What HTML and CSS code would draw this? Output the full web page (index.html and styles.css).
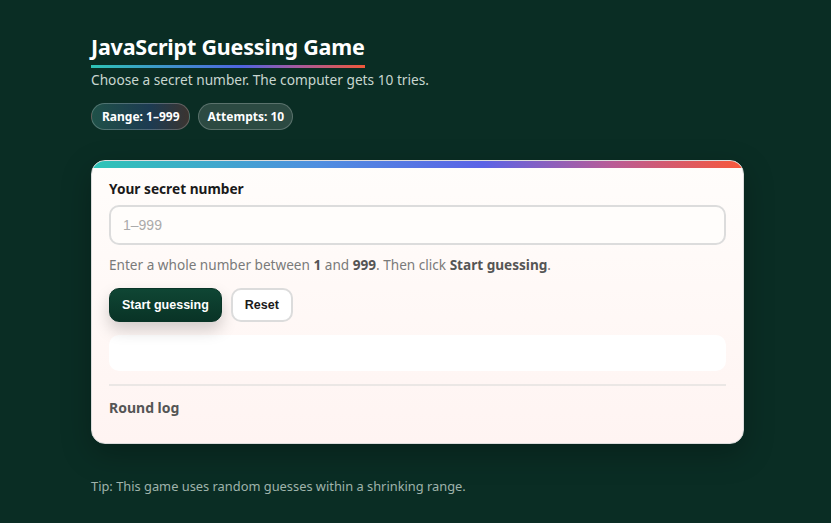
FILE: index.html
```html
<!DOCTYPE html>
<html lang="en">
<head>
<meta charset="utf-8">
<title>JavaScript Guessing Game</title>
<link rel="stylesheet" href="styles.css">
</head>
<body>
<main class="wrap">
  <header class="head">
    <h1 class="title">JavaScript Guessing Game</h1>
    <p class="sub">Choose a secret number. The computer gets 10 tries.</p>
    <div class="pills">
      <span class="pill pill-range">Range: 1–999</span>
      <span class="pill pill-att">Attempts: 10</span>
    </div>
  </header>
  <section class="card">
    <div class="card-bar"></div>
    <div class="card-body">
      <label class="label" for="secret">Your secret number</label>
      <input class="input" id="secret" type="text" placeholder="1–999">
      <p class="help">Enter a whole number between <b>1</b> and <b>999</b>. Then click <b>Start guessing</b>.</p>
      <div class="actions">
        <button class="btn btn-primary">Start guessing</button>
        <button class="btn btn-ghost">Reset</button>
      </div>
      <div class="status"></div>
      <hr class="rule">
      <h2 class="log">Round log</h2>
    </div>
  </section>
  <p class="tip">Tip: This game uses random guesses within a shrinking range.</p>
</main>
</body>
</html>
```
FILE: styles.css
```css
* { box-sizing: border-box; }
html, body { margin: 0; padding: 0; }
body {
  background: #0a2d24;
  font-family: "Noto Sans", "Open Sans", sans-serif;
  color: #eaf2ee;
  height: 523px;
  overflow: hidden;
}
.wrap {
  width: 653px;
  margin-left: 91px;
  padding-top: 33px;
}
.title {
  display: inline-block;
  margin: 0;
  font-size: 21.5px;
  font-weight: 700;
  line-height: 28px;
  color: #ffffff;
  letter-spacing: -0.2px;
  padding-bottom: 7px;
  background-image: linear-gradient(90deg, #2ec4b6, #4f64e0 55%, #a55aa0 75%, #f0583a);
  background-size: 100% 3px;
  background-repeat: no-repeat;
  background-position: 0 100%;
}
.sub {
  margin: 2px 0 0;
  font-size: 13.7px;
  line-height: 20px;
  color: #c8d6d0;
}
.pills {
  display: flex;
  gap: 8px;
  margin-top: 13px;
}
.pill {
  display: inline-flex;
  align-items: center;
  height: 27px;
  padding: 0 9px 0 10px;
  border-radius: 14px;
  font-size: 12px;
  font-weight: 700;
  color: #ffffff;
  border: 1px solid rgba(255,255,255,0.22);
}
.pill-range {
  background: linear-gradient(90deg, #1f5148, #1d3b52 60%, #3b3430);
}
.pill-att {
  padding: 0 8px 0 9px;
  background: rgba(255,255,255,0.14);
}
.card {
  margin-top: 30px;
  height: 284px;
  border-radius: 14px;
  background: linear-gradient(180deg, #fffdfb, #fff4f2);
  border: 1px solid #dcdcdc;
  overflow: hidden;
  box-shadow: 0 10px 30px rgba(0,0,0,0.25);
}
.card-bar {
  height: 7px;
  background: linear-gradient(90deg, #2ec4b6, #4f8ee0 35%, #5b63e6 60%, #b95c96 80%, #f8583a);
}
.card-body {
  padding: 11px 17px 0;
}
.label {
  display: block;
  font-size: 13.7px;
  font-weight: 700;
  line-height: 20px;
  color: #1a1a1a;
}
.input {
  display: block;
  width: 100%;
  height: 40px;
  margin-top: 6px;
  border: 2px solid #dcdcdc;
  border-radius: 10px;
  background: #fffdfb;
  padding: 0 12px;
  font-family: "Liberation Sans", Arial, sans-serif;
  font-size: 14px;
  color: #333;
  outline: none;
}
.input::placeholder { color: #aaaaaa; }
.help {
  margin: 10px 0 0;
  font-size: 13.6px;
  line-height: 20px;
  color: #7a7a7a;
}
.help b { color: #555; font-weight: 700; }
.actions {
  display: flex;
  gap: 9px;
  margin-top: 13px;
}
.btn {
  height: 34px;
  border-radius: 10px;
  font-family: "Liberation Sans", Arial, sans-serif;
  font-size: 12.5px;
  font-weight: 700;
  padding: 0 12px;
  white-space: nowrap;
  cursor: pointer;
}
.btn-primary {
  background: linear-gradient(180deg, #0f4634, #093326);
  color: #ffffff;
  border: 1px solid #0a3528;
  box-shadow: 0 8px 16px rgba(0,0,0,0.18);
}
.btn-ghost {
  background: #ffffff;
  color: #1a1a1a;
  border: 2px solid #dcdcdc;
}
.status {
  margin-top: 13px;
  height: 36px;
  border-radius: 10px;
  background: #ffffff;
}
.rule {
  margin: 13px 0 0;
  border: 0;
  border-top: 2px solid #ebe7e5;
}
.log {
  margin: 12px 0 0;
  font-size: 14px;
  font-weight: 700;
  line-height: 20px;
  color: #555555;
}
.tip {
  margin: 32px 0 0;
  font-size: 12.85px;
  line-height: 20px;
  color: #9fb3ab;
}
```
